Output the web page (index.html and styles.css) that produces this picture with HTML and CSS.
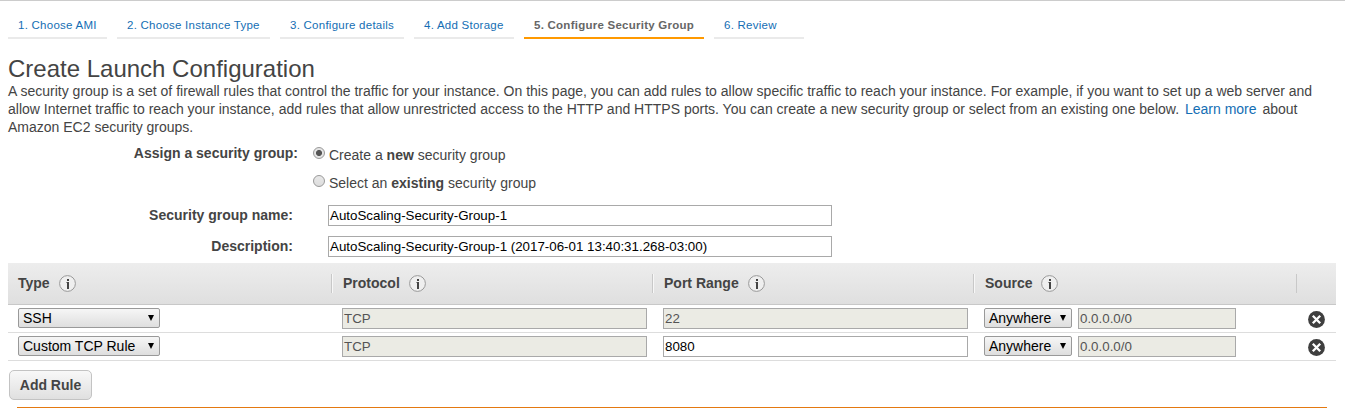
FILE: index.html
```html
<!DOCTYPE html>
<html lang="en">
<head>
<meta charset="utf-8">
<title>Create Launch Configuration</title>
<link rel="stylesheet" href="styles.css">
</head>
<body>
<svg class="defs" width="0" height="0">
  <symbol id="info" viewBox="0 0 17 17"><circle cx="8.500" cy="8.500" r="7.900" fill="#efefef" stroke="#999"/><path d="M8 4h2v2H8zM8 7h2v7H8z" fill="#444"/><path d="M7 7h1v1H7z" fill="#999"/></symbol>
  <symbol id="remove" viewBox="0 0 17 17"><circle cx="8.500" cy="8.500" r="8.400" fill="#3f3f3f"/><path d="M4.800 4.800l7.400 7.400M12.200 4.800l-7.400 7.400" stroke="#fff" stroke-width="2.300"/></symbol>
</svg>
<nav class="steps">
  <a class="step s1"><span>1. Choose AMI</span></a>
  <a class="step s2"><span>2. Choose Instance Type</span></a>
  <a class="step s3"><span>3. Configure details</span></a>
  <a class="step s4"><span>4. Add Storage</span></a>
  <a class="step s5 active"><span>5. Configure Security Group</span></a>
  <a class="step s6"><span>6. Review</span></a>
</nav>
<main>
  <h1><span>Create Launch Configuration</span></h1>
  <p class="intro">
    <span class="line">A security group is a set of firewall rules that control the traffic for your instance. On this page, you can add rules to allow specific traffic to reach your instance. For example, if you want to set up a web server and</span>
    <span class="line">allow Internet traffic to reach your instance, add rules that allow unrestricted access to the HTTP and HTTPS ports. You can create a new security group or select from an existing one below. <a class="more">Learn more</a> about</span>
    <span class="line">Amazon EC2 security groups.</span>
  </p>
  <section class="form">
    <div class="form-row assign">
      <b class="label">Assign a security group:</b>
      <div class="choices">
        <div class="choice"><i class="radio on"></i><span>Create a <b>new</b> security group</span></div>
        <div class="choice"><i class="radio"></i><span>Select an <b>existing</b> security group</span></div>
      </div>
    </div>
    <div class="form-row"><b class="label short">Security group name:</b><div class="field wide">AutoScaling-Security-Group-1</div></div>
    <div class="form-row"><b class="label short">Description:</b><div class="field wide">AutoScaling-Security-Group-1 (2017-06-01 13:40:31.268-03:00)</div></div>
  </section>
  <section class="rules">
    <div class="grid head">
      <div class="cell">Type <svg class="info"><use href="#info"/></svg></div>
      <div class="cell">Protocol <svg class="info"><use href="#info"/></svg></div>
      <div class="cell">Port Range <svg class="info"><use href="#info"/></svg></div>
      <div class="cell">Source <svg class="info"><use href="#info"/></svg></div>
      <div class="cell"></div>
    </div>
    <div class="grid row">
      <div class="cell"><div class="select type">SSH<i class="arrow"></i></div></div>
      <div class="cell"><div class="field off">TCP</div></div>
      <div class="cell"><div class="field off">22</div></div>
      <div class="cell"><div class="select">Anywhere<i class="arrow"></i></div><div class="field off cidr">0.0.0.0/0</div></div>
      <div class="cell"><svg class="remove"><use href="#remove"/></svg></div>
    </div>
    <div class="grid row">
      <div class="cell"><div class="select type">Custom TCP Rule<i class="arrow"></i></div></div>
      <div class="cell"><div class="field off">TCP</div></div>
      <div class="cell"><div class="field">8080</div></div>
      <div class="cell"><div class="select">Anywhere<i class="arrow"></i></div><div class="field off cidr">0.0.0.0/0</div></div>
      <div class="cell"><svg class="remove"><use href="#remove"/></svg></div>
    </div>
  </section>
  <div class="add">Add Rule</div>
  <div class="rule-line"></div>
</main>
</body>
</html>
```
FILE: styles.css
```css
* { box-sizing: border-box; }
body { margin: 0; height: 408px; overflow: hidden; background: #fff; color: #444; font: 14px/18px "Liberation Sans", Arial, sans-serif; border-top: 1px solid #ccc; white-space: nowrap; }
.defs { position: absolute; }
.steps { display: flex; gap: 10px; padding: 13px 8px 0; }
.step { height: 25px; padding-left: 10px; border-bottom: 2px solid #eaeaea; color: #146eb4; font-size: 11.5px; letter-spacing: 0.25px; line-height: 22px; }
.active { color: #666; border-color: #f90; font-weight: bold; }
.s1 { width: 99px; }
.s2 { width: 153px; }
.s3 { width: 124px; }
.s4 { width: 100px; }
.s5 { width: 180px; }
.s6 { width: 90px; }
main { padding: 15px 9px 0 8px; }
h1 { margin: 0; padding-top: 1px; height: 28px; font-weight: normal; font-size: 24px; line-height: 28px; }
.intro { margin: 0; }
.line { display: block; letter-spacing: 0.002px; }
.more { color: #146eb4; margin: 0 2px; }
.form-row { display: flex; height: 31px; }
.form-row.assign { height: 69px; padding-top: 8px; }
.label { width: 290px; text-align: right; }
.label.short { width: 285px; margin-right: 35px; padding-top: 1px; }
.choices { padding: 2px 0 0 15px; }
.choice { display: flex; height: 28px; gap: 4px; }
.radio { width: 12px; height: 12px; border: 1px solid #999; border-radius: 50%; background: linear-gradient(#e8e8e8, #ddd); margin-top: 1px; }
.radio.on { background: radial-gradient(circle, #555 0 2.700px, #e4e4e4 3.300px); }
.field { height: 21px; border: 1px solid #a9a9a9; background: #fff; color: #000; font-size: 13.333px; line-height: 20px; padding-left: 1px; width: 305px; }
.field.wide { width: 504px; }
.field.off { background: #ebebe4; color: #545454; }
.field.cidr { width: 158px; margin-left: 6px; }
.form { height: 127px; }
.grid { display: grid; grid-template-columns: 324px 321px 321px 322px 40px; }
.head { height: 42px; background: linear-gradient(#ededed, #dfdfdf); border-bottom: 1px solid #c8c8c8; font-weight: bold; }
.head .cell { display: flex; margin: 11px 0 11px -1px; height: 19px; padding-left: 11px; align-items: flex-start; border-left: 1px solid #c8c8c8; box-shadow: inset 1px 0 #f7f7f7; }
.head .cell:first-child { border: 0; box-shadow: none; }
.head .cell:last-child { margin-left: 0; box-shadow: none; }
.info { width: 17px; height: 17px; margin: 1px 0 0 9px; }
.row { height: 28px; border-bottom: 1px solid #ddd; }
.row .cell { display: flex; padding: 3px 0 0 10px; }
.row .cell:last-child { padding: 6px 0 0 12px; }
.remove { width: 17px; height: 17px; }
.select { display: flex; justify-content: space-between; width: 88px; height: 20px; border: 1px solid #999; border-radius: 2px; background: linear-gradient(#f6f6f6, #dedede); color: #000; padding: 0 4px; line-height: 18px; }
.select.type { width: 142px; }
.arrow { border: 3px solid transparent; border-top: 6px solid #000; border-bottom: 0; margin: 6px 1px 0 0; height: 6px; }
.add { width: 83px; height: 30px; margin: 9px 0 7px 1px; border: 1px solid #c3c3c3; border-radius: 5px; background: linear-gradient(#f8f8f8, #e0e0e0); text-align: center; line-height: 28px; font-weight: bold; }
.rule-line { height: 1px; margin: 0 9px; background: #e47911; }
```
